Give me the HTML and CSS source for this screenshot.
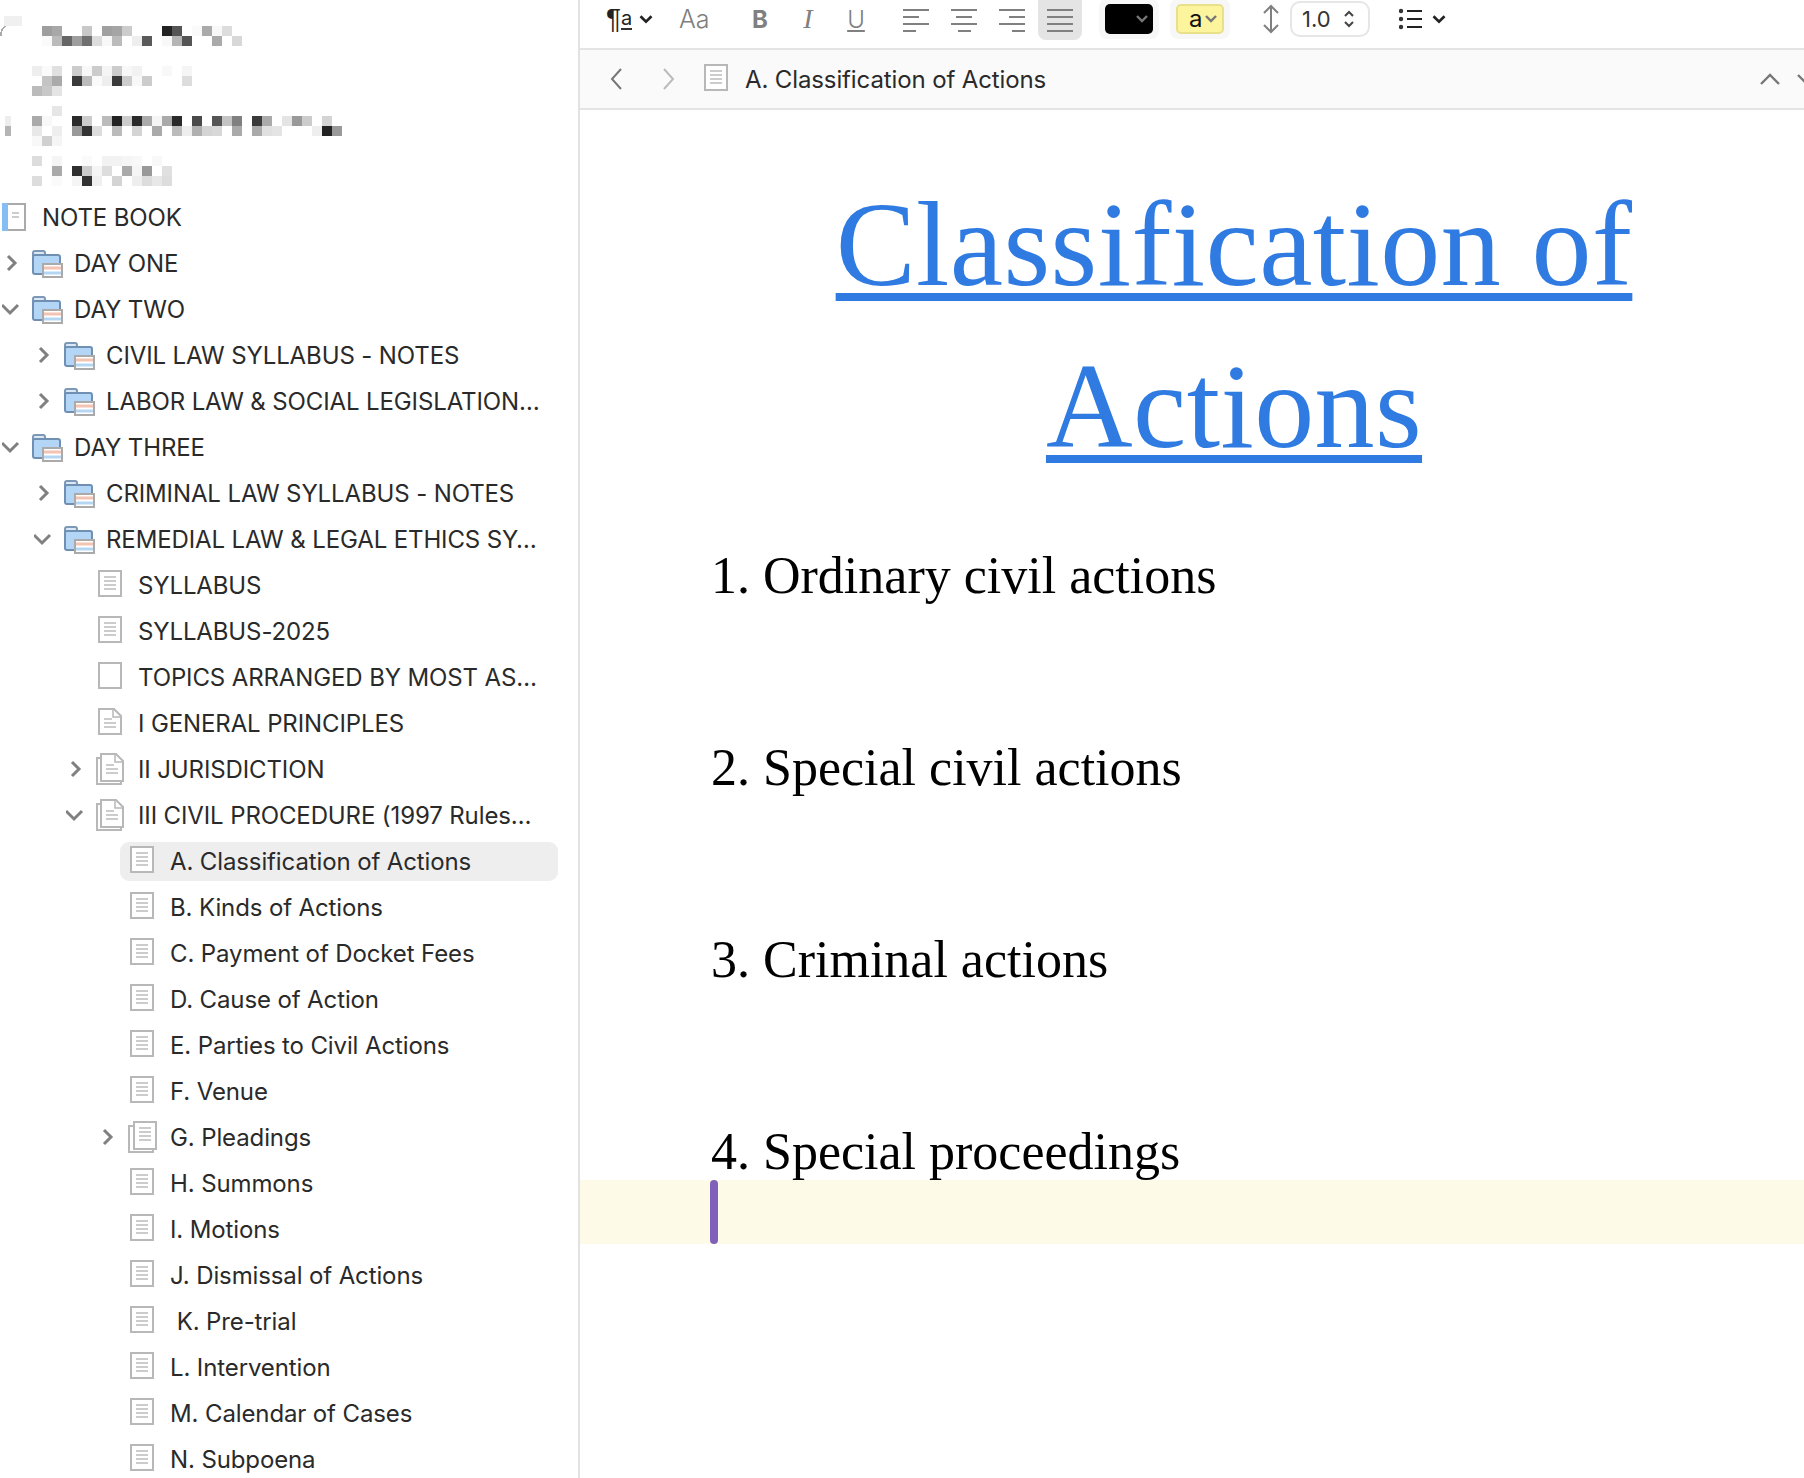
FILE: index.html
```html
<!DOCTYPE html>
<html>
<head>
  <meta charset="utf-8">
  <title>A. Classification of Actions</title>
  <link rel="stylesheet" href="styles.css">
</head>
<body>
  <svg class="defs" width="0" height="0">
    <symbol id="notebook" viewBox="0 0 32 32">
      <rect x="3" y="3" width="22" height="26" fill="#fff" stroke="#aaa" stroke-width="2"/>
      <rect x="2" y="2" width="6" height="28" fill="#86bdf2"/>
      <path d="M12 12h7M12 16h7" stroke="#ccc" stroke-width="2"/>
    </symbol>
    <symbol id="folder" viewBox="0 0 32 32">
      <path d="M2 9V6q0-2 2-2h8q2 0 2 2v3" fill="#dbe8f5" stroke="#7b98b6" stroke-width="2"/>
      <rect x="2" y="8" width="27" height="19" rx="2" fill="#b3d6f6" stroke="#6f90b3" stroke-width="2"/>
      <rect x="12" y="17" width="19" height="13" fill="#fff" stroke="#aaa" stroke-width="2"/>
      <path d="M13 21h17" stroke="#f3c3b3" stroke-width="3"/>
      <path d="M13 26h17" stroke="#b4d6f3" stroke-width="3"/>
    </symbol>
    <symbol id="doc" viewBox="0 0 32 32">
      <rect x="4" y="2" width="22" height="25" fill="#fff" stroke="#b8b8b8" stroke-width="2"/>
      <path d="M9 8h12M9 12h12M9 16h12M9 20h12" stroke="#ccc" stroke-width="2"/>
    </symbol>
    <symbol id="blank" viewBox="0 0 32 32">
      <rect x="4" y="2" width="22" height="25" fill="#fff" stroke="#b8b8b8" stroke-width="2"/>
    </symbol>
    <symbol id="fold" viewBox="0 0 32 32">
      <path d="M4 2h15l7 7v18H4z" fill="#fff" stroke="#b8b8b8" stroke-width="2"/>
      <path d="M18 2v8h8" fill="none" stroke="#b8b8b8" stroke-width="1.5"/>
      <path d="M9 12h8M9 16h12M9 20h12" stroke="#ccc" stroke-width="2"/>
    </symbol>
    <symbol id="foldstack" viewBox="0 0 32 32">
      <path d="M5 5H2v26h24v-3" fill="none" stroke="#b8b8b8" stroke-width="2"/>
      <path d="M6 1h15l7 7v20H6z" fill="#fff" stroke="#b8b8b8" stroke-width="2"/>
      <path d="M20 1v8h8" fill="none" stroke="#b8b8b8" stroke-width="1.5"/>
      <path d="M11 12h8M11 16h12M11 20h12" stroke="#ccc" stroke-width="2"/>
    </symbol>
    <symbol id="docstack" viewBox="0 0 32 32">
      <path d="M6 5H2v26h24v-3" fill="none" stroke="#b8b8b8" stroke-width="2"/>
      <rect x="7" y="1" width="22" height="27" fill="#fff" stroke="#b8b8b8" stroke-width="2"/>
      <path d="M12 7h12M12 11h12M12 15h12M12 19h12" stroke="#ccc" stroke-width="2"/>
    </symbol>
    <symbol id="right" viewBox="0 0 20 20">
      <path d="M6 3l7 7-7 7" fill="none" stroke="#808080" stroke-width="3"/>
    </symbol>
    <symbol id="down" viewBox="0 0 20 20">
      <path d="M0 6l8 8 8-8" fill="none" stroke="#808080" stroke-width="3"/>
    </symbol>
    <symbol id="caret" viewBox="0 0 14 10">
      <path d="M2 2l5 5 5-5" fill="none" stroke="currentColor" stroke-width="2.4"/>
    </symbol>
  </svg>

  <div class="app">
    <aside class="sidebar">
      <svg class="blur" width="578" height="194" shape-rendering="crispEdges">
        <path d="M5 26q-5 5-4 10" fill="none" stroke="#aaa" stroke-width="1.5"/>
        <rect x="4" y="16" width="10" height="10" fill="#f0f0f0"/><rect x="14" y="16" width="8" height="10" fill="#f0f0f0"/>
        <rect x="42" y="26" width="10" height="10" fill="#9e9e9e"/><rect x="52" y="26" width="10" height="10" fill="#a8a8a8"/><rect x="82" y="26" width="10" height="10" fill="#c8c8c8"/><rect x="102" y="26" width="10" height="10" fill="#a0a0a0"/><rect x="112" y="26" width="10" height="10" fill="#a5a5a5"/><rect x="122" y="26" width="10" height="10" fill="#ccc"/><rect x="162" y="26" width="10" height="10" fill="#222"/><rect x="172" y="26" width="10" height="10" fill="#555"/><rect x="192" y="26" width="10" height="10" fill="#fafafa"/><rect x="202" y="26" width="10" height="10" fill="#aaa"/><rect x="212" y="26" width="10" height="10" fill="#f8f8f8"/><rect x="222" y="26" width="10" height="10" fill="#ddd"/>
        <rect x="42" y="36" width="10" height="10" fill="#fafafa"/><rect x="52" y="36" width="10" height="10" fill="#bbb"/><rect x="62" y="36" width="10" height="10" fill="#666"/><rect x="72" y="36" width="10" height="10" fill="#9e9e9e"/><rect x="82" y="36" width="10" height="10" fill="#707070"/><rect x="92" y="36" width="10" height="10" fill="#ddd"/><rect x="102" y="36" width="10" height="10" fill="#f8f8f8"/><rect x="112" y="36" width="10" height="10" fill="#bbb"/><rect x="132" y="36" width="10" height="10" fill="#eee"/><rect x="142" y="36" width="10" height="10" fill="#5a5a5a"/><rect x="162" y="36" width="10" height="10" fill="#f8f8f8"/><rect x="172" y="36" width="10" height="10" fill="#b5b5b5"/><rect x="182" y="36" width="10" height="10" fill="#555"/><rect x="212" y="36" width="10" height="10" fill="#aaa"/><rect x="232" y="36" width="10" height="10" fill="#d8d8d8"/>

        <rect x="32" y="66" width="10" height="10" fill="#eee"/><rect x="42" y="66" width="10" height="10" fill="#fafafa"/><rect x="52" y="66" width="10" height="10" fill="#e0e0e0"/><rect x="72" y="66" width="10" height="10" fill="#ccc"/><rect x="82" y="66" width="10" height="10" fill="#f8f8f8"/><rect x="92" y="66" width="10" height="10" fill="#ccc"/><rect x="102" y="66" width="10" height="10" fill="#f5f5f5"/><rect x="112" y="66" width="10" height="10" fill="#ccc"/><rect x="122" y="66" width="10" height="10" fill="#f8f8f8"/><rect x="132" y="66" width="10" height="10" fill="#f2f2f2"/><rect x="162" y="66" width="10" height="10" fill="#f8f8f8"/><rect x="182" y="66" width="10" height="10" fill="#f5f5f5"/>
        <rect x="42" y="76" width="10" height="10" fill="#c4c4c4"/><rect x="52" y="76" width="10" height="10" fill="#aaa"/><rect x="72" y="76" width="10" height="10" fill="#3a3a3a"/><rect x="82" y="76" width="10" height="10" fill="#bbb"/><rect x="92" y="76" width="10" height="10" fill="#fafafa"/><rect x="102" y="76" width="10" height="10" fill="#eee"/><rect x="112" y="76" width="10" height="10" fill="#3a3a3a"/><rect x="122" y="76" width="10" height="10" fill="#ccc"/><rect x="132" y="76" width="10" height="10" fill="#f8f8f8"/><rect x="142" y="76" width="10" height="10" fill="#ccc"/><rect x="182" y="76" width="10" height="10" fill="#ddd"/>
        <rect x="32" y="86" width="10" height="10" fill="#bbb"/><rect x="42" y="86" width="10" height="10" fill="#c8c8c8"/><rect x="52" y="86" width="10" height="10" fill="#e4e4e4"/>

        <rect x="52" y="106" width="10" height="10" fill="#e6e6e6"/>
        <rect x="5" y="116" width="6" height="10" fill="#eee"/><rect x="32" y="116" width="10" height="10" fill="#aaa"/><rect x="42" y="116" width="10" height="10" fill="#f8f8f8"/><rect x="72" y="116" width="10" height="10" fill="#2a2a2a"/><rect x="82" y="116" width="10" height="10" fill="#ccc"/><rect x="102" y="116" width="10" height="10" fill="#bbb"/><rect x="112" y="116" width="10" height="10" fill="#222"/><rect x="122" y="116" width="10" height="10" fill="#ccc"/><rect x="132" y="116" width="10" height="10" fill="#2a2a2a"/><rect x="142" y="116" width="10" height="10" fill="#aaa"/><rect x="152" y="116" width="10" height="10" fill="#f5f5f5"/><rect x="162" y="116" width="10" height="10" fill="#aaa"/><rect x="172" y="116" width="10" height="10" fill="#2a2a2a"/><rect x="192" y="116" width="10" height="10" fill="#4a4a4a"/><rect x="212" y="116" width="10" height="10" fill="#555"/><rect x="222" y="116" width="10" height="10" fill="#c4c4c4"/><rect x="232" y="116" width="10" height="10" fill="#808080"/><rect x="252" y="116" width="10" height="10" fill="#3a3a3a"/><rect x="262" y="116" width="10" height="10" fill="#aaa"/><rect x="282" y="116" width="10" height="10" fill="#e4e4e4"/><rect x="292" y="116" width="10" height="10" fill="#999"/><rect x="302" y="116" width="10" height="10" fill="#ccc"/><rect x="322" y="116" width="10" height="10" fill="#d4d4d4"/>
        <rect x="5" y="126" width="6" height="10" fill="#b5b5b5"/><rect x="32" y="126" width="10" height="10" fill="#e8e8e8"/><rect x="52" y="126" width="10" height="10" fill="#eee"/><rect x="72" y="126" width="10" height="10" fill="#999"/><rect x="82" y="126" width="10" height="10" fill="#333"/><rect x="92" y="126" width="10" height="10" fill="#ddd"/><rect x="112" y="126" width="10" height="10" fill="#bbb"/><rect x="132" y="126" width="10" height="10" fill="#d4d4d4"/><rect x="152" y="126" width="10" height="10" fill="#aaa"/><rect x="172" y="126" width="10" height="10" fill="#bbb"/><rect x="182" y="126" width="10" height="10" fill="#eee"/><rect x="192" y="126" width="10" height="10" fill="#b0b0b0"/><rect x="202" y="126" width="10" height="10" fill="#d4d4d4"/><rect x="212" y="126" width="10" height="10" fill="#d8d8d8"/><rect x="232" y="126" width="10" height="10" fill="#aaa"/><rect x="252" y="126" width="10" height="10" fill="#aaa"/><rect x="262" y="126" width="10" height="10" fill="#e0e0e0"/><rect x="272" y="126" width="10" height="10" fill="#e4e4e4"/><rect x="312" y="126" width="10" height="10" fill="#eee"/><rect x="322" y="126" width="10" height="10" fill="#222"/><rect x="332" y="126" width="10" height="10" fill="#999"/>
        <rect x="32" y="136" width="10" height="10" fill="#f8f8f8"/><rect x="42" y="136" width="10" height="10" fill="#d0d0d0"/><rect x="52" y="136" width="10" height="10" fill="#f5f5f5"/>

        <rect x="32" y="156" width="10" height="10" fill="#ddd"/><rect x="52" y="156" width="10" height="10" fill="#f5f5f5"/><rect x="82" y="156" width="10" height="10" fill="#fafafa"/><rect x="102" y="156" width="10" height="10" fill="#f2f2f2"/><rect x="112" y="156" width="10" height="10" fill="#f2f2f2"/><rect x="122" y="156" width="10" height="10" fill="#f5f5f5"/><rect x="132" y="156" width="10" height="10" fill="#f8f8f8"/><rect x="152" y="156" width="10" height="10" fill="#f8f8f8"/>
        <rect x="52" y="166" width="10" height="10" fill="#aaa"/><rect x="72" y="166" width="10" height="10" fill="#2f2f2f"/><rect x="82" y="166" width="10" height="10" fill="#ccc"/><rect x="92" y="166" width="10" height="10" fill="#f5f5f5"/><rect x="102" y="166" width="10" height="10" fill="#ddd"/><rect x="122" y="166" width="10" height="10" fill="#aaa"/><rect x="132" y="166" width="10" height="10" fill="#f5f5f5"/><rect x="142" y="166" width="10" height="10" fill="#999"/><rect x="162" y="166" width="10" height="10" fill="#e0e0e0"/>
        <rect x="32" y="176" width="10" height="10" fill="#ddd"/><rect x="52" y="176" width="10" height="10" fill="#fafafa"/><rect x="72" y="176" width="10" height="10" fill="#f5f5f5"/><rect x="82" y="176" width="10" height="10" fill="#333"/><rect x="92" y="176" width="10" height="10" fill="#f0f0f0"/><rect x="112" y="176" width="10" height="10" fill="#d4d4d4"/><rect x="132" y="176" width="10" height="10" fill="#eee"/><rect x="142" y="176" width="10" height="10" fill="#ddd"/><rect x="152" y="176" width="10" height="10" fill="#e8e8e8"/><rect x="162" y="176" width="10" height="10" fill="#ddd"/>
      </svg>

      <div class="row root"><svg class="ico"><use href="#notebook"/></svg><span class="label">NOTE BOOK</span></div>
      <div class="row"><span class="chev"><svg><use href="#right"/></svg></span><svg class="ico"><use href="#folder"/></svg><span class="label">DAY ONE</span></div>
      <div class="row"><span class="chev"><svg><use href="#down"/></svg></span><svg class="ico"><use href="#folder"/></svg><span class="label">DAY TWO</span></div>
      <div class="row d1"><span class="chev"><svg><use href="#right"/></svg></span><svg class="ico"><use href="#folder"/></svg><span class="label">CIVIL LAW SYLLABUS - NOTES</span></div>
      <div class="row d1"><span class="chev"><svg><use href="#right"/></svg></span><svg class="ico"><use href="#folder"/></svg><span class="label">LABOR LAW &amp; SOCIAL LEGISLATION…</span></div>
      <div class="row"><span class="chev"><svg><use href="#down"/></svg></span><svg class="ico"><use href="#folder"/></svg><span class="label">DAY THREE</span></div>
      <div class="row d1"><span class="chev"><svg><use href="#right"/></svg></span><svg class="ico"><use href="#folder"/></svg><span class="label">CRIMINAL LAW SYLLABUS - NOTES</span></div>
      <div class="row d1"><span class="chev"><svg><use href="#down"/></svg></span><svg class="ico"><use href="#folder"/></svg><span class="label">REMEDIAL LAW &amp; LEGAL ETHICS SY…</span></div>
      <div class="row d2"><span class="chev"></span><svg class="ico"><use href="#doc"/></svg><span class="label">SYLLABUS</span></div>
      <div class="row d2"><span class="chev"></span><svg class="ico"><use href="#doc"/></svg><span class="label">SYLLABUS-2025</span></div>
      <div class="row d2"><span class="chev"></span><svg class="ico"><use href="#blank"/></svg><span class="label">TOPICS ARRANGED BY MOST AS…</span></div>
      <div class="row d2"><span class="chev"></span><svg class="ico"><use href="#fold"/></svg><span class="label">I GENERAL PRINCIPLES</span></div>
      <div class="row d2"><span class="chev"><svg><use href="#right"/></svg></span><svg class="ico"><use href="#foldstack"/></svg><span class="label">II JURISDICTION</span></div>
      <div class="row d2"><span class="chev"><svg><use href="#down"/></svg></span><svg class="ico"><use href="#foldstack"/></svg><span class="label">III CIVIL PROCEDURE (1997 Rules…</span></div>
      <div class="row d3 selected"><span class="chev"></span><svg class="ico"><use href="#doc"/></svg><span class="label">A. Classification of Actions</span></div>
      <div class="row d3"><span class="chev"></span><svg class="ico"><use href="#doc"/></svg><span class="label">B. Kinds of Actions</span></div>
      <div class="row d3"><span class="chev"></span><svg class="ico"><use href="#doc"/></svg><span class="label">C. Payment of Docket Fees</span></div>
      <div class="row d3"><span class="chev"></span><svg class="ico"><use href="#doc"/></svg><span class="label">D. Cause of Action</span></div>
      <div class="row d3"><span class="chev"></span><svg class="ico"><use href="#doc"/></svg><span class="label">E. Parties to Civil Actions</span></div>
      <div class="row d3"><span class="chev"></span><svg class="ico"><use href="#doc"/></svg><span class="label">F. Venue</span></div>
      <div class="row d3"><span class="chev"><svg><use href="#right"/></svg></span><svg class="ico"><use href="#docstack"/></svg><span class="label">G. Pleadings</span></div>
      <div class="row d3"><span class="chev"></span><svg class="ico"><use href="#doc"/></svg><span class="label">H. Summons</span></div>
      <div class="row d3"><span class="chev"></span><svg class="ico"><use href="#doc"/></svg><span class="label">I. Motions</span></div>
      <div class="row d3"><span class="chev"></span><svg class="ico"><use href="#doc"/></svg><span class="label">J. Dismissal of Actions</span></div>
      <div class="row d3"><span class="chev"></span><svg class="ico"><use href="#doc"/></svg><span class="label">&nbsp;K. Pre-trial</span></div>
      <div class="row d3"><span class="chev"></span><svg class="ico"><use href="#doc"/></svg><span class="label">L. Intervention</span></div>
      <div class="row d3"><span class="chev"></span><svg class="ico"><use href="#doc"/></svg><span class="label">M. Calendar of Cases</span></div>
      <div class="row d3"><span class="chev"></span><svg class="ico"><use href="#doc"/></svg><span class="label">N. Subpoena</span></div>
    </aside>

    <main class="main">
      <div class="toolbar">
        <span class="style-btn"><span class="pilcrow">¶</span><span class="style-a">a</span><svg class="tb-caret dark"><use href="#caret"/></svg></span>
        <span class="font-btn">Aa</span>
        <span class="tb-btn bold">B</span>
        <span class="tb-btn italic">I</span>
        <span class="tb-btn under">U</span>
        <span class="aligns">
          <span class="tb-btn"><svg width="26" height="24" class="al"><path d="M0 2h26M0 9h16M0 16h26M0 23h13"/></svg></span>
          <span class="tb-btn"><svg width="26" height="24" class="al"><path d="M0 2h26M5 9h16M0 16h26M7 23h13"/></svg></span>
          <span class="tb-btn"><svg width="26" height="24" class="al"><path d="M0 2h26M10 9h16M0 16h26M13 23h13"/></svg></span>
          <span class="tb-btn active"><svg width="26" height="24" class="al"><path d="M0 2h26M0 9h26M0 16h26M0 23h26"/></svg></span>
        </span>
        <span class="swatch-wrap"><span class="swatch black"><svg class="tb-caret grey"><use href="#caret"/></svg></span></span>
        <span class="swatch-wrap"><span class="swatch yellow">a<svg class="tb-caret grey"><use href="#caret"/></svg></span></span>
        <svg class="spacing" width="20" height="30"><path d="M10 2v26M3 9l7-7 7 7M3 21l7 7 7-7" fill="none" stroke="#808080" stroke-width="2"/></svg>
        <span class="stepper">1.0<svg width="12" height="20"><path d="M2 7l4-4 4 4M2 13l4 4 4-4" fill="none" stroke="#444" stroke-width="2"/></svg></span>
        <svg class="list-ico" width="24" height="22"><path d="M9 3h15M9 11h15M9 19h15" stroke="#222" stroke-width="2"/><circle cx="3" cy="3" r="2.2" fill="#333"/><circle cx="3" cy="11" r="2.2" fill="#333"/><circle cx="3" cy="19" r="2.2" fill="#333"/></svg>
        <svg class="tb-caret dark"><use href="#caret"/></svg>
      </div>

      <div class="navbar">
        <svg class="nav-arrow" width="14" height="24"><path d="M12 2L3 12l9 10" fill="none" stroke="#777" stroke-width="2"/></svg>
        <svg class="nav-arrow next" width="14" height="24"><path d="M2 2l9 10-9 10" fill="none" stroke="#bbb" stroke-width="2"/></svg>
        <svg class="ico nav-doc"><use href="#doc"/></svg>
        <span class="label">A. Classification of Actions</span>
        <svg class="nav-up" width="22" height="14"><path d="M2 12l9-9 9 9" fill="none" stroke="#777" stroke-width="2.4"/></svg>
        <svg class="nav-down" width="22" height="14"><path d="M2 3l9 9 9-9" fill="none" stroke="#777" stroke-width="2.4"/></svg>
      </div>

      <div class="doc">
        <h1 class="title">Classification of Actions</h1>
        <p class="item">1. Ordinary civil actions</p>
        <p class="item">2. Special civil actions</p>
        <p class="item">3. Criminal actions</p>
        <p class="item">4. Special proceedings</p>
        <div class="current"><span class="cursor"></span></div>
      </div>
    </main>
  </div>
</body>
</html>
```

FILE: styles.css
```css
html, body {
  margin: 0;
  height: 100%;
  overflow: hidden;
  background: #ffffff;
}
body {
  font-family: Inter, "Liberation Sans", sans-serif;
  color: #2a2a2a;
}
.defs {
  display: block;
  height: 0;
}
.app {
  display: flex;
  width: 1888px;
  height: 1478px;
}

/* tree */
.sidebar {
  flex: 0 0 578px;
  border-right: 2px solid #e2e2e2;
  overflow: hidden;
}
.blur {
  display: block;
}
.row {
  display: flex;
  align-items: center;
  height: 46px;
  font-size: 24px;
  letter-spacing: -0.12px;
  white-space: nowrap;
}
.row.d1 { padding-left: 32px; }
.row.d2 { padding-left: 64px; }
.row.d3 { padding-left: 96px; }
.chev {
  flex: 0 0 30px;
  height: 20px;
}
.chev svg {
  display: block;
  width: 20px;
  height: 20px;
  margin-left: 2px;
}
.ico {
  flex: 0 0 32px;
  width: 32px;
  height: 32px;
  margin: 0 11px 0 1px;
}
.label {
  display: block;
}
.row.root .ico {
  margin-right: 10px;
  margin-left: 0;
}
.selected {
  position: relative;
}
.selected::before {
  content: "";
  position: absolute;
  left: 120px;
  width: 438px;
  height: 39px;
  border-radius: 9px;
  background: #eeeeee;
}
.selected > * {
  position: relative;
}

/* main */
.main {
  flex: 0 0 1308px;
  display: flex;
  flex-direction: column;
}
.toolbar {
  display: flex;
  align-items: center;
  height: 38px;
  padding: 0 0 10px 26px;
  border-bottom: 2px solid #e4e4e4;
  color: #808080;
}
.style-btn {
  display: flex;
  align-items: center;
  width: 60px;
  color: #222;
  font-size: 28px;
}
.pilcrow {
  font-family: "Liberation Sans", sans-serif;
}
.style-a {
  border-bottom: 2px solid #333;
  line-height: 20px;
  font-size: 20px;
  margin-right: 6px;
}
.tb-caret {
  flex: 0 0 14px;
  width: 14px;
  height: 10px;
}
.tb-caret.dark {
  flex-basis: 16px;
  width: 16px;
  height: 11px;
  color: #222;
}
.tb-caret.grey { color: #777; }
.font-btn {
  width: 57px;
  margin-left: 13px;
  font-size: 25px;
  font-weight: 300;
}
.tb-btn {
  display: flex;
  align-items: center;
  justify-content: center;
  flex: 0 0 48px;
  height: 40px;
  font-size: 24px;
}
.bold {
  font-weight: 700;
}
.italic {
  font-family: "Liberation Serif", serif;
  font-style: italic;
  font-size: 28px;
}
.under {
  text-decoration: underline;
  font-weight: 300;
}
.aligns {
  display: flex;
  margin-left: 12px;
  align-self: flex-start;
}
.al path {
  stroke: #808080;
  stroke-width: 2;
  fill: none;
}
.tb-btn.active {
  flex-basis: 44px;
  margin-left: 2px;
  background: #e4e4e4;
  border-radius: 0 0 8px 8px;
}
.swatch-wrap {
  display: flex;
  padding: 5px 6px;
  margin-left: 17px;
  background: #f7f7f7;
  border-radius: 8px;
}
.swatch-wrap + .swatch-wrap {
  margin-left: 11px;
}
.swatch {
  display: flex;
  align-items: center;
  justify-content: flex-end;
  width: 48px;
  height: 30px;
  padding-right: 4px;
  box-sizing: border-box;
  border-radius: 5px;
  background: #000;
}
.swatch.yellow {
  justify-content: space-between;
  padding-left: 11px;
  background: #fdf59e;
  border: 2px solid #e8e08a;
  color: #111;
  font-size: 24px;
  line-height: 1;
}
.spacing {
  margin-left: 31px;
}
.stepper {
  display: flex;
  align-items: center;
  justify-content: space-between;
  box-sizing: border-box;
  width: 80px;
  height: 36px;
  margin-left: 9px;
  padding: 0 13px 0 10px;
  border: 2px solid #e6e6e6;
  border-radius: 10px;
  color: #333;
  font-size: 22px;
}
.list-ico {
  margin: 0 9px 0 28px;
}
.navbar {
  display: flex;
  align-items: center;
  height: 58px;
  padding-left: 29px;
  background: #fafafa;
  border-bottom: 2px solid #e4e4e4;
  font-size: 24px;
  letter-spacing: -0.12px;
}
.nav-arrow.next {
  margin-left: 39px;
}
.nav-doc {
  margin: 0 12px 0 25px;
}
.nav-up {
  position: absolute;
  left: 1759px;
  top: 72px;
}
.nav-down {
  position: absolute;
  left: 1796px;
  top: 72px;
}

/* document */
.doc {
  font-family: "Liberation Serif", serif;
  color: #000;
}
.title {
  margin: 0 131px;
  padding-top: 54px;
  font-size: 120px;
  font-weight: 400;
  letter-spacing: 0.4px;
  line-height: 162px;
  text-align: center;
  color: #2f7be1;
  text-decoration: underline;
  text-decoration-thickness: 8px;
  text-underline-offset: 8px;
}
.item {
  margin: 0 131px;
  height: 192px;
  font-size: 52px;
  line-height: 64px;
}
.item:first-of-type {
  margin-top: 56px;
}
.item:last-of-type {
  height: 60px;
}
.current {
  height: 64px;
  padding-left: 130px;
  background: #fdfae7;
}
.cursor {
  display: block;
  width: 8px;
  height: 64px;
  border-radius: 4px;
  background: #7f60bb;
}
```
